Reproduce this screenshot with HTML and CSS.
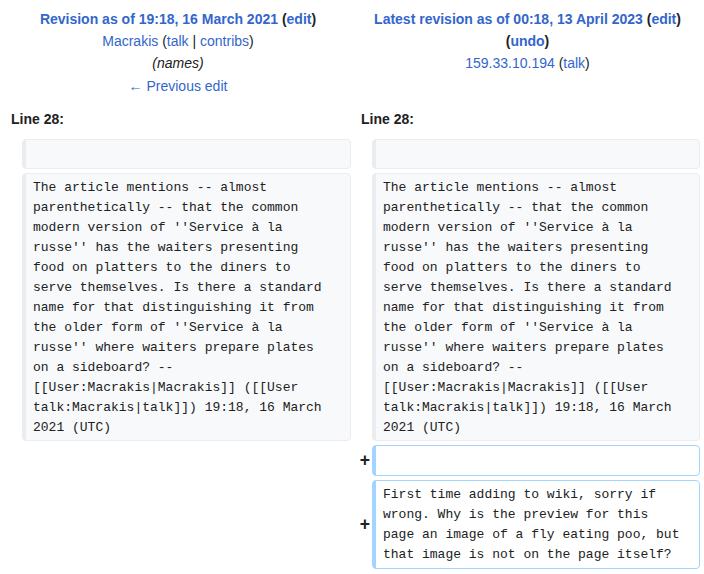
FILE: index.html
```
<!DOCTYPE html>
<html lang="en">
<head>
<meta charset="utf-8">
<title>Diff</title>
<link rel="stylesheet" href="styles.css">
</head>
<body>
<table class="diff">
<colgroup><col class="col-marker"><col class="col-left"><col class="col-marker"><col class="col-right"></colgroup>
<tr class="title-row">
<td colspan="2" class="title"><strong><a href="#">Revision as of 19:18, 16 March 2021</a> (<a href="#">edit</a>)</strong><br><a href="#">Macrakis</a> (<a href="#">talk</a> | <a href="#">contribs</a>)<br><i>(names)</i><br><a href="#">← Previous edit</a></td>
<td colspan="2" class="title"><strong><a href="#">Latest revision as of 00:18, 13 April 2023</a> (<a href="#">edit</a>)</strong><br><strong>(<a href="#">undo</a>)</strong><br><a href="#">159.33.10.194</a> (<a href="#">talk</a>)</td>
</tr>
<tr>
<td colspan="2" class="lineno">Line 28:</td>
<td colspan="2" class="lineno">Line 28:</td>
</tr>
<tr>
<td class="marker"></td>
<td class="box context"><div class="empty-line"></div></td>
<td class="marker"></td>
<td class="box context"><div class="empty-line"></div></td>
</tr>
<tr>
<td class="marker"></td>
<td class="box context"><div class="code">The article mentions -- almost
parenthetically -- that the common
modern version of ''Service à la
russe'' has the waiters presenting
food on platters to the diners to
serve themselves. Is there a standard
name for that distinguishing it from
the older form of ''Service à la
russe'' where waiters prepare plates
on a sideboard? --
[[User:Macrakis|Macrakis]] ([[User
talk:Macrakis|talk]]) 19:18, 16 March
2021 (UTC)</div></td>
<td class="marker"></td>
<td class="box context"><div class="code">The article mentions -- almost
parenthetically -- that the common
modern version of ''Service à la
russe'' has the waiters presenting
food on platters to the diners to
serve themselves. Is there a standard
name for that distinguishing it from
the older form of ''Service à la
russe'' where waiters prepare plates
on a sideboard? --
[[User:Macrakis|Macrakis]] ([[User
talk:Macrakis|talk]]) 19:18, 16 March
2021 (UTC)</div></td>
</tr>
<tr class="added-row">
<td colspan="2" class="empty"></td>
<td class="marker"><span class="plus">+</span></td>
<td class="box added"><div class="empty-line"></div></td>
</tr>
<tr class="added-row">
<td colspan="2" class="empty"></td>
<td class="marker"><span class="plus">+</span></td>
<td class="box added"><div class="code">First time adding to wiki, sorry if
wrong. Why is the preview for this
page an image of a fly eating poo, but
that image is not on the page itself?</div></td>
</tr>
</table>
</body>
</html>
```
FILE: styles.css
```
html, body {
  margin: 0;
  padding: 0;
  background: #ffffff;
}

body {
  font-family: "Liberation Sans", Arial, sans-serif;
  font-size: 14px;
  line-height: 22.4px;
  color: #202122;
}

a {
  color: #3366cc;
  text-decoration: none;
}

.diff {
  width: 703px;
  margin-left: 1px;
  table-layout: fixed;
  border-collapse: separate;
  border-spacing: 4px;
}

.col-marker { width: 13px; }
.col-left { width: 329px; }
.col-right { width: 328px; }

.diff td {
  padding: 0;
}

.diff td.title {
  text-align: center;
  vertical-align: top;
  padding: 3.5px 1px 3px;
}

.diff td.lineno {
  font-weight: bold;
  padding: 4px 6px;
  vertical-align: top;
}

.diff td.marker {
  text-align: right;
  vertical-align: middle;
  font-weight: bold;
  font-size: 17.5px;
  line-height: 21px;
  padding: 0;
}

.plus {
  display: inline-block;
  margin-right: -2px;
}

.diff td.box {
  vertical-align: top;
  border-style: solid;
  border-width: 1px 1px 1px 4px;
  border-radius: 4.3px;
  padding: 4.25px 14px 2.25px 7px;
}

.diff td.context {
  background: #f8f9fa;
  border-color: #eaecf0;
}

.diff td.added {
  background: #ffffff;
  border-color: #a3d3ff;
}

.added-row td.box {
  padding-top: 4.5px;
  padding-bottom: 2.5px;
}

.empty-line {
  height: 21.5px;
}

.code {
  font-family: "Liberation Mono", "Courier New", monospace;
  font-size: 13px;
  line-height: 20px;
  white-space: pre-wrap;
  color: #202122;
}
```
